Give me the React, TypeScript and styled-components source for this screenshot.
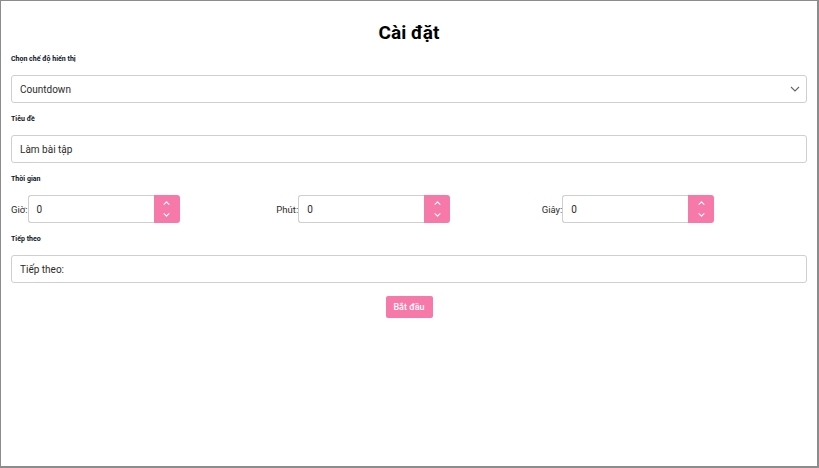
import React from "react";
import styled, { createGlobalStyle } from "styled-components";

const GlobalStyle = createGlobalStyle`
  html, body {
    margin: 0;
    padding: 0;
    background: #fff;
  }
  body {
    font-family: Roboto, "Noto Sans", Arial, sans-serif;
  }
`;

const Frame = styled.div`
  box-sizing: border-box;
  width: 819px;
  height: 468px;
  border: 1px solid #8c8c8c;
  border-right-width: 2px;
  border-bottom-width: 2px;
  padding: 0 10px;
  background: #fff;
`;

const Title = styled.h1`
  margin: 0;
  padding-top: 20px;
  height: 22px;
  line-height: 24px;
  text-align: center;
  font-size: 19px;
  font-weight: 700;
  color: #000;
`;

const Field = styled.div`
  display: flex;
  flex-direction: column;
  padding-top: 12px;
`;

const Label = styled.label`
  display: block;
  font-size: 7px;
  line-height: 8px;
  font-weight: 700;
  color: #0d1526;
  margin-bottom: 12px;
`;

const Box = styled.div`
  box-sizing: border-box;
  position: relative;
  height: 28px;
  border: 1px solid #cfcfcf;
  border-radius: 3px;
  display: flex;
  align-items: center;
  padding: 0 8px;
  font-size: 10px;
  color: #2b2b2b;
  background: #fff;
`;

const Chevron = styled.svg`
  position: absolute;
  right: 6px;
  top: 9px;
`;

const TimeRow = styled.div`
  display: grid;
  grid-template-columns: repeat(3, 1fr);
`;

const TimeGroup = styled.div`
  display: flex;
  align-items: center;
`;

const TimeLabel = styled.span`
  font-size: 9.5px;
  color: #2b2b2b;
  margin-right: 0;
`;

const NumberBox = styled.div`
  box-sizing: border-box;
  width: 126px;
  height: 28px;
  border: 1px solid #cfcfcf;
  border-right: none;
  border-radius: 3px 0 0 3px;
  display: flex;
  align-items: center;
  padding: 0 8px;
  font-size: 10px;
  color: #2b2b2b;
`;

const Spinner = styled.div`
  width: 26px;
  height: 28px;
  background: #f779a9;
  border-radius: 0 3px 3px 0;
  display: flex;
  flex-direction: column;
  align-items: center;
  justify-content: center;
  gap: 8px;
`;

const Actions = styled.div`
  display: flex;
  justify-content: center;
  padding-top: 13px;
`;

const StartButton = styled.button`
  width: 47px;
  height: 22px;
  border: none;
  border-radius: 2px;
  background: #f779a9;
  color: #fff;
  font-family: Roboto, Arial, sans-serif;
  font-size: 9px;
  font-weight: 500;
  padding: 0;
  cursor: pointer;
`;

const Arrow = ({ up }: { up?: boolean }) => (
  <svg width="7" height="4" viewBox="0 0 7 4">
    <path
      d={up ? "M1 3.3 L3.5 0.8 L6 3.3" : "M1 0.7 L3.5 3.2 L6 0.7"}
      fill="none"
      stroke="#fff"
      strokeWidth="1.1"
      strokeLinecap="round"
    />
  </svg>
);

const TimeInput = ({ label }: { label: string }) => (
  <TimeGroup>
    <TimeLabel>{label}</TimeLabel>
    <NumberBox>0</NumberBox>
    <Spinner>
      <Arrow up />
      <Arrow />
    </Spinner>
  </TimeGroup>
);

export default function App() {
  return (
    <>
      <GlobalStyle />
      <Frame>
        <Title>Cài đặt</Title>
        <Field>
          <Label>Chọn chế độ hiển thị</Label>
          <Box>
            Countdown
            <Chevron width="10" height="8" viewBox="0 0 10 8">
              <path d="M1 2 L5 6 L9 2" fill="none" stroke="#666" strokeWidth="1.1" />
            </Chevron>
          </Box>
        </Field>
        <Field>
          <Label>Tiêu đề</Label>
          <Box>Làm bài tập</Box>
        </Field>
        <Field>
          <Label>Thời gian</Label>
          <TimeRow>
            <TimeInput label="Giờ:" />
            <TimeInput label="Phút:" />
            <TimeInput label="Giây:" />
          </TimeRow>
        </Field>
        <Field>
          <Label>Tiếp theo</Label>
          <Box>Tiếp theo:</Box>
        </Field>
        <Actions>
          <StartButton>Bắt đầu</StartButton>
        </Actions>
      </Frame>
    </>
  );
}
